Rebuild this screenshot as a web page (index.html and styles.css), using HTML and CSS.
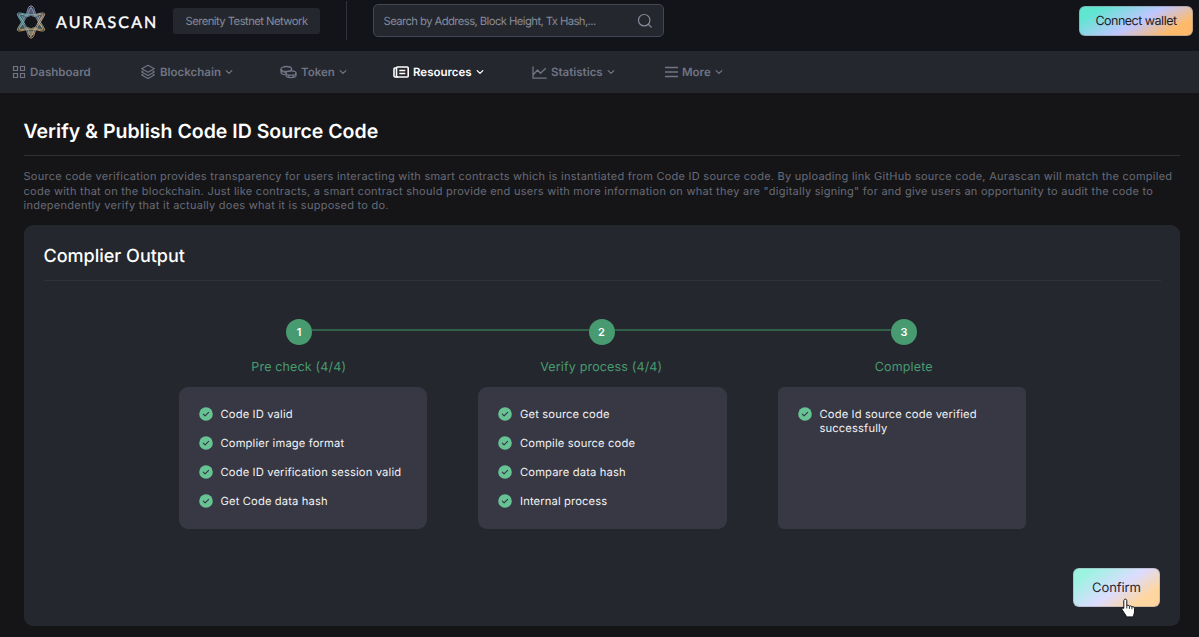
FILE: index.html
```html
<!DOCTYPE html>
<html lang="en">
<head>
<meta charset="utf-8">
<title>Aurascan - Verify &amp; Publish Code ID</title>
<link rel="stylesheet" href="styles.css">
</head>
<body>
<svg class="defs" width="0" height="0">
  <symbol id="chev" viewBox="0 0 8 8"><path d="M1.2 2.6 4 5.4l2.8-2.8" fill="none" stroke="currentColor" stroke-width="1.3" stroke-linecap="round" stroke-linejoin="round"/></symbol>
  <symbol id="check" viewBox="0 0 14 14"><circle cx="7" cy="7" r="6.8" fill="#67c294"/><path d="m4.3 7.2 1.8 1.7 3.5-3.5" fill="none" stroke="#343743" stroke-width="1.1" stroke-linecap="round" stroke-linejoin="round"/></symbol>
</svg>
<header class="top">
  <a class="brand">
    <svg class="mark" viewBox="0 0 32 36" width="32" height="36">
      <defs><linearGradient id="g" x1="0" y1="0" x2="0" y2="1"><stop offset="0" stop-color="#a7b3df"/><stop offset=".35" stop-color="#8396ad"/><stop offset=".65" stop-color="#739b9d"/><stop offset="1" stop-color="#c9a46b"/></linearGradient>
      <linearGradient id="h" x1="0" y1="0" x2="1" y2=".45"><stop offset="0" stop-color="#69bcc2"/><stop offset=".45" stop-color="#7aa4ab"/><stop offset=".75" stop-color="#b9a697"/><stop offset="1" stop-color="#f0b069"/></linearGradient></defs>
      <g fill="none" stroke-linejoin="round">
        <path d="M16 2.500 20.500 10 29.500 10 26 18 29.500 26 20.500 26 16 34 11.500 26 2.500 26 6 18 2.500 10 11.500 10Z" fill="url(#g)" fill-opacity=".5"/>
        <g stroke="url(#g)" stroke-width=".9">
          <path d="M16 2C19 2 19 6 20.500 9.500 22 14 28 21 29.500 25 30.500 28 26 27 22 26 18 25 14 25 10 26 6 27 1.500 28 2.500 25 4 21 10 14 11.500 9.500 13 6 13 2 16 2Z"/>
          <path d="M16 4C18 4 18 7.500 19.300 11 20.800 15 25.500 20 27.500 24 28.500 26.500 25 26 21.500 24.500 18 23.500 14 23.500 10.500 24.500 7 26 3.500 26.500 4.500 24 6.500 20 11.200 15 12.700 11 14 7.500 14 4 16 4Z"/>
        </g>
        <g stroke="url(#h)" stroke-width=".9">
          <path d="M16 34C19 34 19 30 20.500 26.500 22 22 28 15 29.500 11 30.500 8 26 9 22 10 18 11 14 11 10 10 6 9 1.500 8 2.500 11 4 15 10 22 11.500 26.500 13 30 13 34 16 34Z"/>
          <path d="M16 32C18 32 18 28.500 19.300 25 20.800 21 25.500 16 27.500 12 28.500 9.500 25 10 21.500 11.500 18 12.500 14 12.500 10.500 11.500 7 10 3.500 9.500 4.500 12 6.500 16 11.200 21 12.700 25 14 28.500 14 32 16 32Z"/>
          <path d="M13 28h6M13.500 30h5M5 13l4 5-4 5M27 13l-4 5 4 5M7 12l2 3M25 12l-2 3"/>
        </g>
        <path d="m16 11.800 4.500 1.600 2.200 4.600-2.200 4.600L16 24.200l-4.500-1.600L9.300 18l2.200-4.600Z" fill="#15161a"/>
      </g>
    </svg>
    <span class="word">AURASCAN</span>
  </a>
  <span class="network">Serenity Testnet Network</span>
  <span class="rule"></span>
  <div class="search"><span>Search by Address, Block Height, Tx Hash,...</span>
    <svg width="16" height="16" viewBox="0 0 16 16" fill="none" stroke="currentColor" stroke-width="1.2" stroke-linecap="round"><circle cx="7.200" cy="7.200" r="5.700"/><path d="m11.500 11.500 2.700 2.700"/></svg>
  </div>
  <a class="wallet">Connect wallet</a>
</header>
<nav class="nav">
  <a class="n1"><svg width="14" height="14" viewBox="0 0 14 14" fill="none" stroke="currentColor" stroke-width="1.200"><path d="M1.500 1.500h4v4h-4zM8.500 1.500h4v4h-4zM1.500 8.500h4v4h-4zM8.500 8.500h4v4h-4z"/></svg><span>Dashboard</span></a>
  <a class="n2"><svg width="16" height="16" viewBox="0 0 16 16" fill="none" stroke="currentColor" stroke-width="1.200" stroke-linejoin="round"><path d="M8 1.300 14.300 4.800 8 8.300 1.700 4.800ZM3.300 7 1.700 8 8 11.500 14.300 8l-1.600-1M3.300 10.200l-1.600.9L8 14.600l6.300-3.500-1.600-.9"/></svg><span>Blockchain</span><svg class="chev"><use href="#chev"/></svg></a>
  <a class="n3"><svg width="17" height="14" viewBox="0 0 17 14" fill="none" stroke="currentColor" stroke-width="1.300"><ellipse cx="6.300" cy="4" rx="5.300" ry="2.500"/><path d="M1 4v3.200c0 1.300 2 2.400 4.500 2.500M11.600 4v1.500M1.200 5.800c1 1.300 2.800 1.500 5 1.500"/><ellipse cx="11" cy="8" rx="5" ry="2.200"/><path d="M6 8v2.300c0 1.400 2.200 2.300 5 2.300s5-.9 5-2.300V8M9 10v2.300M13 10v2.300"/></svg><span>Token</span><svg class="chev"><use href="#chev"/></svg></a>
  <a class="n4 on"><svg width="16" height="12" viewBox="0 0 16 12" fill="none" stroke="currentColor" stroke-width="1.600" stroke-linejoin="round"><rect x="3.500" y="1" width="11.700" height="10" rx="1"/><path d="M3.500 2H1.800Q1 2 1 3v7q0 1 1.200 1H5M6.300 4.500h6M6.300 7.500h6"/></svg><span>Resources</span><svg class="chev"><use href="#chev"/></svg></a>
  <a class="n5"><svg width="15" height="13" viewBox="0 0 15 13" fill="none" stroke="currentColor" stroke-width="1.300" stroke-linecap="round" stroke-linejoin="round"><path d="M1 .8v11.400h13.200M1.500 8.500 5.500 4l3 3.200 5-4.700"/></svg><span>Statistics</span><svg class="chev"><use href="#chev"/></svg></a>
  <a class="n6"><svg width="13" height="12" viewBox="0 0 13 12" fill="none" stroke="currentColor" stroke-width="1.300"><path d="M0 1.500h13M0 6h13M0 10.500h13"/></svg><span>More</span><svg class="chev"><use href="#chev"/></svg></a>
</nav>
<main class="page">
  <h1>Verify &amp; Publish Code ID Source Code</h1>
  <p class="intro">Source code verification provides transparency for users interacting with smart contracts which is instantiated from Code ID source code. By uploading link GitHub source code, Aurascan will match the compiled<br>code with that on the blockchain. Just like contracts, a smart contract should provide end users with more information on what they are "digitally signing" for and give users an opportunity to audit the code to<br>independently verify that it actually does what it is supposed to do.</p>
  <section class="panel">
    <h2>Complier Output</h2>
    <div class="stepper"><b>1</b><i></i><b>2</b><i></i><b>3</b></div>
    <div class="labels"><span>Pre check (4/4)</span><span>Verify process (4/4)</span><span>Complete</span></div>
    <div class="cards">
      <ul>
        <li><svg><use href="#check"/></svg><span>Code ID valid</span></li>
        <li><svg><use href="#check"/></svg><span>Complier image format</span></li>
        <li><svg><use href="#check"/></svg><span>Code ID verification session valid</span></li>
        <li><svg><use href="#check"/></svg><span>Get Code data hash</span></li>
      </ul>
      <ul>
        <li><svg><use href="#check"/></svg><span>Get source code</span></li>
        <li><svg><use href="#check"/></svg><span>Compile source code</span></li>
        <li><svg><use href="#check"/></svg><span>Compare data hash</span></li>
        <li><svg><use href="#check"/></svg><span>Internal process</span></li>
      </ul>
      <ul class="last">
        <li><svg><use href="#check"/></svg><span>Code Id source code verified<br>successfully</span></li>
      </ul>
    </div>
    <div class="actions"><a class="confirm">Confirm
      <svg class="hand" width="15" height="20" viewBox="0 0 15 20"><path d="M4.300 1.200c1 0 1.500.7 1.500 1.500v5c.4-.6 2.300-.5 2.600.5.500-.6 2.200-.4 2.500.7.800-.5 2.600 0 2.600 1.500v3.500c0 1.700-1.100 2.800-1.100 5H5.300c0-1.500-1.300-2.700-2.300-4.300L1 11.600c-.7-1.200.8-2.200 1.800-1.200V2.700c0-.8.500-1.500 1.500-1.500Z" fill="#fff" stroke="#111" stroke-width="1"/><path d="M5.800 7.500v3M8.400 8.300v2.500M10.900 9v2.200" stroke="#111" stroke-width=".9"/></svg></a></div>
  </section>
</main>
</body>
</html>
```
FILE: styles.css
```css
* { box-sizing: border-box; }
body { margin: 0; height: 637px; overflow: hidden; background: #151517; color: #fff; font-family: Inter, "Liberation Sans", sans-serif; text-rendering: geometricPrecision; }
.defs { display: block; height: 0; }
.top { height: 51px; background: #131419; display: flex; align-items: flex-start; padding: 0 6px 0 15px; }
.brand { display: flex; width: 158px; padding-top: 4px; }
.mark { display: block; }
.word { margin: 10px 0 0 9px; font: 400 16px/18px Lato, sans-serif; letter-spacing: 2.100px; color: #fff; -webkit-text-stroke: .4px #fff; }
.network { width: 147px; height: 26px; margin-top: 8px; border-radius: 3px; background: #24272e; color: #868a98; font-size: 11.300px; letter-spacing: -.56px; line-height: 26px; text-align: center; white-space: nowrap; }
.rule { width: 1px; height: 39px; margin: 1px 26px 0; background: #30333c; }
.search { width: 291.500px; height: 33px; margin-top: 4px; margin-left: -.500px; border: 1px solid #434653; border-radius: 5px; background: #24272e; color: #868a98; display: flex; align-items: center; justify-content: space-between; padding: 0 10px 0 10px; font-size: 11.300px; letter-spacing: -.59px; white-space: nowrap; }
.wallet { width: 114px; height: 30px; margin: 6px 0 0 auto; border: 1px solid rgba(140,140,150,.5); border-radius: 6px; background: linear-gradient(151deg, #5ee6d0 15%, #bfc6ff 52%, #ffba69 82%); background-origin: border-box; color: #1c1d26; font-size: 12.500px; letter-spacing: -.5px; line-height: 30px; text-align: center; white-space: nowrap; }
.nav { height: 42px; background: #24272e; color: #717483; display: flex; align-items: center; padding-left: 12px; font-size: 11.500px; font-weight: 600; }
.nav a { display: flex; align-items: center; gap: 4px; white-space: nowrap; }
.nav span { padding-bottom: 1px; }
.nav .chev { width: 8px; height: 8px; }
.nav .on { color: #fff; }
.n1 { width: 128px; }
.n2 { width: 140px; }
.n3 { width: 113px; }
.n4 { width: 139px; }
.n5 { width: 133px; }
.page { padding: 28px 19.500px 0 23.500px; }
h1 { margin: 0; height: 35px; font-size: 19.500px; line-height: 21px; font-weight: 600; border-bottom: 1px solid #303135; }
.intro { margin: 13px 0 0; color: #686b78; font-size: 11px; line-height: 14.600px; letter-spacing: .255px; white-space: nowrap; height: 56px; }
.panel { height: 401px; border-radius: 9px; background: #24272e; padding: 21px 19px 0 20px; }
h2 { margin: 0; height: 35px; border-bottom: 1px solid #30333c; font-size: 18px; line-height: 21px; font-weight: 500; }
.stepper { display: flex; align-items: center; width: 631px; margin: 37.500px 0 0 242.500px; }
.stepper b { width: 26px; height: 26px; border-radius: 50%; background: #489b70; font-size: 11px; font-weight: 600; line-height: 26px; text-align: center; }
.stepper i { flex: 1; height: 2px; background: #306148; margin-bottom: 3px; }
.labels { display: grid; grid-template-columns: repeat(3, 302.500px); margin: 13px 0 0 104px; color: #489b70; font-size: 12.500px; line-height: 19px; letter-spacing: .16px; text-align: center; }
.cards { display: grid; grid-template-columns: repeat(3, 248.500px); column-gap: 51px; margin: 10.500px 0 0 135px; }
.cards ul { list-style: none; margin: 0; height: 142px; border-radius: 9px; background: #373843; padding: 20px 0 0 20px; }
.cards .last { border-radius: 6px; }
.cards li { display: flex; height: 29px; gap: 8px; font-size: 11.200px; line-height: 14.500px; letter-spacing: .14px; color: #f2f2f4; white-space: nowrap; }
.cards svg { width: 14px; height: 14px; flex: none; }
.cards .last span { line-height: 14px; }
.actions { display: flex; justify-content: flex-end; margin-top: 38.500px; padding-right: .6px; }
.confirm { position: relative; width: 87px; height: 39px; border: 1px solid rgba(150,150,160,.4); border-radius: 6px; background: linear-gradient(145deg, #9df3e2 15%, #dcdcff 52%, #ffd6a0 80%); background-origin: border-box; color: #24272e; font-size: 13px; letter-spacing: -.1px; line-height: 38px; text-align: center; }
.hand { position: absolute; left: 47px; top: 29px; }
```
